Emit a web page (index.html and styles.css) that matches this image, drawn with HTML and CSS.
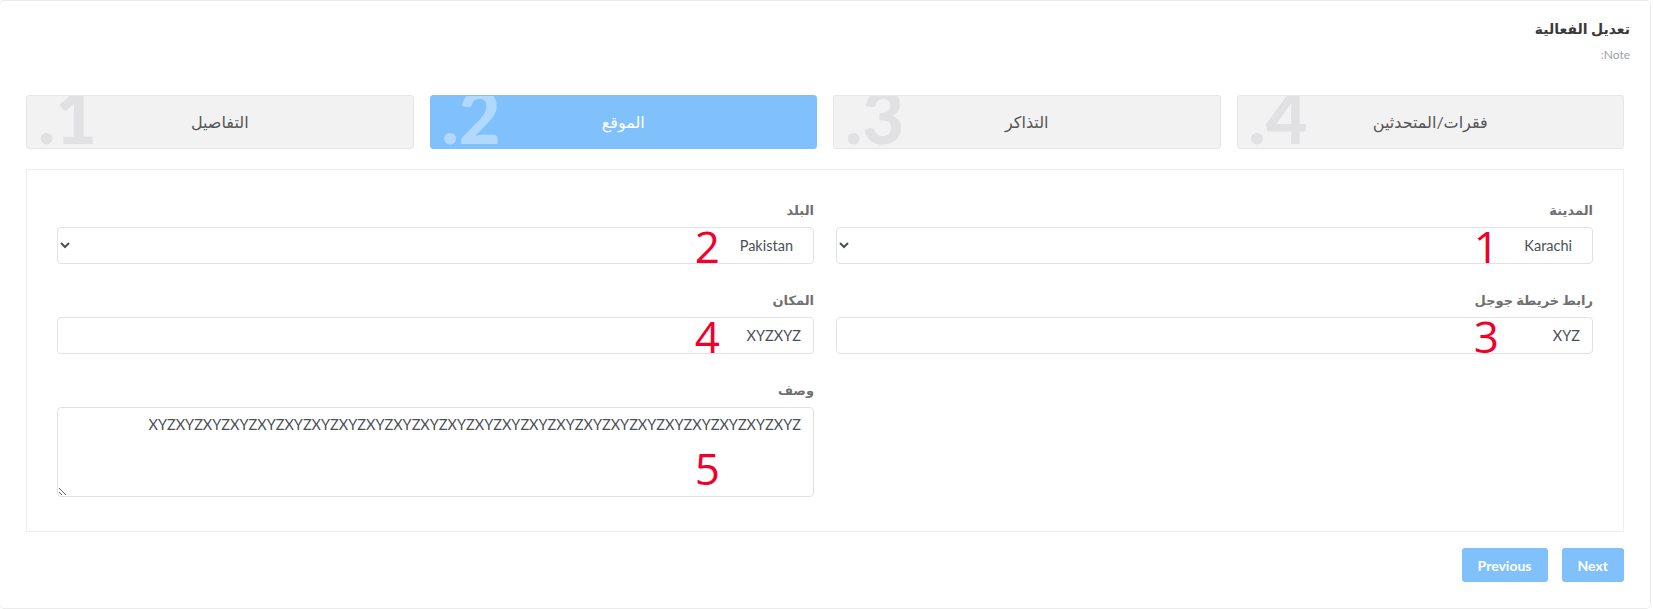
FILE: index.html
```html
<!DOCTYPE html>
<html lang="ar" dir="rtl">
<head>
<meta charset="utf-8">
<title>تعديل الفعالية</title>
<link rel="stylesheet" href="styles.css">
</head>
<body>
<div class="card">
  <header class="card-header">
    <h1 class="title">تعديل الفعالية</h1>
    <p class="note">Note:</p>
  </header>
  <div class="card-body">
    <ol class="steps">
      <li class="step"><span class="step-num">1.</span><span class="step-label">التفاصيل</span></li>
      <li class="step active"><span class="step-num">2.</span><span class="step-label">الموقع</span></li>
      <li class="step"><span class="step-num">3.</span><span class="step-label">التذاكر</span></li>
      <li class="step"><span class="step-num">4.</span><span class="step-label">فقرات/المتحدثين</span></li>
    </ol>
    <form class="panel">
      <div class="field">
        <label class="label">المدينة</label>
        <div class="control">
          <select class="input select"><option>Karachi</option></select>
          <span class="mark">1</span>
        </div>
      </div>
      <div class="field">
        <label class="label">البلد</label>
        <div class="control">
          <select class="input select"><option>Pakistan</option></select>
          <span class="mark">2</span>
        </div>
      </div>
      <div class="field">
        <label class="label">رابط خريطة جوجل</label>
        <div class="control">
          <input class="input" type="text" value="XYZ">
          <span class="mark">3</span>
        </div>
      </div>
      <div class="field">
        <label class="label">المكان</label>
        <div class="control">
          <input class="input" type="text" value="XYZXYZ">
          <span class="mark">4</span>
        </div>
      </div>
      <div class="field field-desc">
        <label class="label">وصف</label>
        <div class="control">
          <textarea class="input textarea">XYZXYZXYZXYZXYZXYZXYZXYZXYZXYZXYZXYZXYZXYZXYZXYZXYZXYZXYZXYZXYZXYZXYZXYZ</textarea>
          <span class="mark mark-desc">5</span>
        </div>
      </div>
    </form>
    <div class="actions">
      <button class="btn" type="button">Previous</button>
      <button class="btn" type="button">Next</button>
    </div>
  </div>
</div>
</body>
</html>
```
FILE: styles.css
```css
html, body {
  margin: 0;
  padding: 0;
  background: #ffffff;
}

body {
  font-family: Lato, "DejaVu Sans", sans-serif;
  color: #495057;
  overflow: hidden;
}

.card {
  box-sizing: border-box;
  width: 1652px;
  height: 609px;
  margin: 0 2px 0 -1px;
  border: 1px solid #ebebeb;
  border-radius: 5px;
  background: #fff;
}

.card-header {
  padding: 17px 20px 0 20px;
}

.title {
  margin: 0;
  font-size: 14px;
  line-height: 22px;
  font-weight: 700;
  color: #3a3a3a;
}

.note {
  margin: 6px 0 0 0;
  font-size: 12px;
  line-height: 18px;
  color: #9da3a8;
}

.card-body {
  padding: 0 26px;
}

.steps {
  direction: ltr;
  list-style: none;
  margin: 31px 0 0 0;
  padding: 0;
  display: grid;
  grid-template-columns: repeat(4, 1fr);
  column-gap: 16px;
}

.step {
  position: relative;
  overflow: hidden;
  box-sizing: border-box;
  height: 54px;
  border: 1px solid #e6e6e6;
  border-radius: 3px;
  background: #f2f2f2;
  display: flex;
  align-items: center;
  justify-content: center;
}

.step-num {
  position: absolute;
  left: 11px;
  top: -16px;
  direction: rtl;
  font-family: Lato, sans-serif;
  font-size: 72px;
  line-height: 72px;
  font-weight: 900;
  color: #e1e1e3;
}

.step-label {
  position: relative;
  direction: rtl;
  font-size: 16px;
  color: #555;
}

.step.active {
  background: #80c1fc;
  border-color: #80c1fc;
}

.step.active .step-num {
  color: #b1d9fd;
}

.step.active .step-label {
  color: #ffffff;
}

.panel {
  margin: 20px 0 0 0;
  box-sizing: border-box;
  border: 1px solid #eeeeee;
  padding: 30px 30px 34px 30px;
  display: grid;
  grid-template-columns: 1fr 1fr;
  column-gap: 22px;
  row-gap: 26px;
}

.field-desc {
  grid-column: 2;
}

.label {
  display: block;
  font-size: 13px;
  line-height: 20px;
  font-weight: 700;
  color: #707070;
  margin-bottom: 7px;
}

.control {
  position: relative;
}

.input {
  display: block;
  box-sizing: border-box;
  width: 100%;
  height: 37px;
  margin: 0;
  padding: 0 12px;
  border: 1px solid #e2e2e2;
  border-radius: 4px;
  background: #fff;
  font-family: Lato, "DejaVu Sans", sans-serif;
  font-size: 14.5px;
  color: #495057;
  outline: none;
}

.select {
  padding: 0 16px 0 4px;
}

.textarea {
  height: 90px;
  padding: 7px 12px;
  line-height: 20px;
  resize: vertical;
}

.mark {
  position: absolute;
  right: 94px;
  top: -3px;
  font-family: "Open Sans", sans-serif;
  font-weight: 400;
  font-size: 44px;
  line-height: 44px;
  color: #f2002c;
  pointer-events: none;
}

.mark-desc {
  top: 39px;
}

.actions {
  direction: ltr;
  display: flex;
  justify-content: flex-end;
  gap: 14px;
  margin-top: 16px;
}

.btn {
  box-sizing: border-box;
  height: 34px;
  padding: 0 16px;
  border: 0;
  border-radius: 3px;
  background: #80c1fc;
  color: #ffffff;
  font-family: Lato, sans-serif;
  font-size: 14px;
  font-weight: 700;
}
```
